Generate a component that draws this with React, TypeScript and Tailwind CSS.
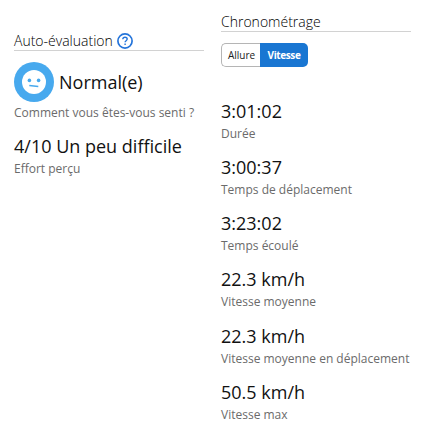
interface Stat {
  value: string;
  label: string;
}

const timingStats: Stat[] = [
  { value: "3:01:02", label: "Durée" },
  { value: "3:00:37", label: "Temps de déplacement" },
  { value: "3:23:02", label: "Temps écoulé" },
  { value: "22.3 km/h", label: "Vitesse moyenne" },
  { value: "22.3 km/h", label: "Vitesse moyenne en déplacement" },
  { value: "50.5 km/h", label: "Vitesse max" },
];

function StatBlock({ value, label }: Stat) {
  return (
    <div>
      <div className="text-[18px] leading-6 text-[#111]">{value}</div>
      <div className="pt-px text-[12px] leading-5 text-[#6b6b6b]">{label}</div>
    </div>
  );
}

function FeelingIcon() {
  return (
    <svg viewBox="0 0 40 40" className="size-10 shrink-0">
      <circle cx="20" cy="20" r="20" fill="#47a9ee" />
      <circle cx="20" cy="20" r="12" fill="#fff" />
      <circle cx="15.4" cy="18.4" r="1.8" fill="#47a9ee" />
      <circle cx="24.6" cy="18.4" r="1.8" fill="#47a9ee" />
      <path d="M15.3 23.5l9 1" stroke="#47a9ee" strokeWidth="1.5" />
    </svg>
  );
}

function HelpIcon() {
  return (
    <svg viewBox="0 0 16 16" className="mt-px size-4 shrink-0">
      <circle cx="8" cy="8" r="7.1" fill="none" stroke="#2474da" strokeWidth="1.7" />
      <path
        d="M5.8 6.2c.1-1.3 1-2 2.2-2s2.2.8 2.2 1.9c0 1.6-2.1 1.6-2.1 3.2M8.1 10.6v1.5"
        fill="none"
        stroke="#2474da"
        strokeWidth="1.4"
      />
    </svg>
  );
}

export default function App() {
  return (
    <div className="flex h-[435px] w-[421px] bg-white font-['Open_Sans',sans-serif]">
      <section className="ml-[14px] w-[190px] pt-[30px]">
        <h2 className="flex h-[21px] items-center gap-1 border-b border-[#d2d2d2] text-[14px] font-light text-black">
          Auto-évaluation
          <HelpIcon />
        </h2>
        <div className="mt-[11px] flex items-center gap-[5px] text-[18px] text-[#111]">
          <FeelingIcon />
          Normal(e)
        </div>
        <div className="pt-px text-[12px] leading-5 text-[#6b6b6b]">Comment vous êtes-vous senti ?</div>
        <div className="mt-[11px]">
          <StatBlock value="4/10 Un peu difficile" label="Effort perçu" />
        </div>
      </section>
      <section className="ml-[17px] w-[190px] pt-[11px]">
        <h2 className="flex h-[21px] items-center border-b border-[#d2d2d2] text-[14px] font-light text-black">
          Chronométrage
        </h2>
        <div className="mt-[11px] flex h-6 w-[87px] text-[10px]">
          <button className="w-[39px] rounded-l-[5px] border border-r-0 border-[#b5b5b5] pl-px text-[#222]">Allure</button>
          <button className="w-12 rounded-r-[5px] bg-[#1976d2] font-bold tracking-[-0.4px] text-white">Vitesse</button>
        </div>
        <div className="mt-[32px] flex flex-col gap-[11.15px]">
          {timingStats.map((s) => (
            <StatBlock key={s.label} value={s.value} label={s.label} />
          ))}
        </div>
      </section>
    </div>
  );
}
